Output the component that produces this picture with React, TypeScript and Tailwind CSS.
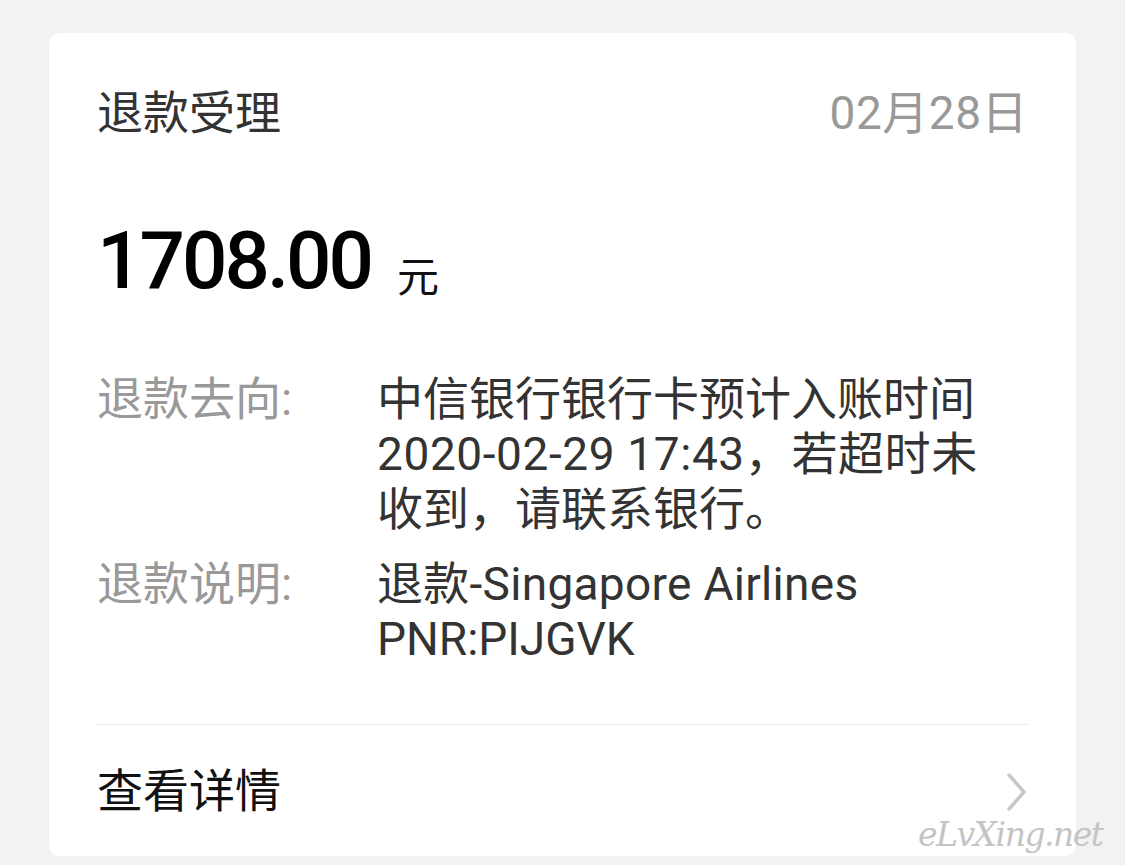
import React from 'react';

const cjk = '[font-family:Roboto,"Noto_Sans_CJK_SC",sans-serif]';

const Chevron: React.FC = () => (
  <svg width="22" height="40" viewBox="0 0 22 40" fill="none">
    <path d="M3 3 L18 20 L3 37" stroke="#c8c8c8" strokeWidth="3.5" strokeLinecap="round" strokeLinejoin="round" />
  </svg>
);

export default function App() {
  return (
    <div className={`relative min-h-[865px] w-[1125px] overflow-hidden bg-[#f2f2f2] pt-[33px] pl-[49px] ${cjk}`}>
      {/* Refund card */}
      <div className="w-[1027px] h-[823px] bg-white rounded-[10px] px-[48px] pt-[52px]">
        <div className="flex items-center justify-between h-[56px] text-[46px] leading-[56px]">
          <span className="text-[#333]">退款受理</span>
          <span className="text-[#999] tracking-[0.5px]">02月28日</span>
        </div>

        <div className="flex items-end mt-[80px] h-[80px]">
          <span className="text-[80px] leading-[80px] font-medium text-black tracking-[-3px]">1708.00</span>
          <span className="text-[42px] leading-[42px] text-[#111] ml-[26px] mb-[2px]">元</span>
        </div>

        <div className="mt-[71px] flex text-[46px] leading-[55px]">
          <span className="w-[280px] shrink-0 text-[#999]">退款去向:</span>
          <div className="text-[#333] whitespace-nowrap">
            <div>中信银行银行卡预计入账时间</div>
            <div className="tracking-[0.6px]">2020-02-29 17:43，若超时未</div>
            <div>收到，请联系银行。</div>
          </div>
        </div>

        <div className="mt-[20px] flex text-[46px] leading-[55px]">
          <span className="w-[280px] shrink-0 text-[#999]">退款说明:</span>
          <div className="text-[#333] whitespace-nowrap">
            <div className="tracking-[0.3px]">退款-Singapore Airlines</div>
            <div>PNR:PIJGVK</div>
          </div>
        </div>

        <div className="mt-[57px] border-t border-[#ebebeb]" />

        <div className="mt-[39px] flex items-center justify-between h-[55px]">
          <span className="text-[46px] leading-[55px] text-[#111]">查看详情</span>
          <Chevron />
        </div>
      </div>

      {/* watermark */}
      <span className="absolute left-[918px] top-[810px] whitespace-nowrap text-[33px] italic text-[#c4c4c4] [font-family:'DejaVu_Serif',serif] tracking-[-1.5px]">
        eLvXing.net
      </span>
    </div>
  );
}
